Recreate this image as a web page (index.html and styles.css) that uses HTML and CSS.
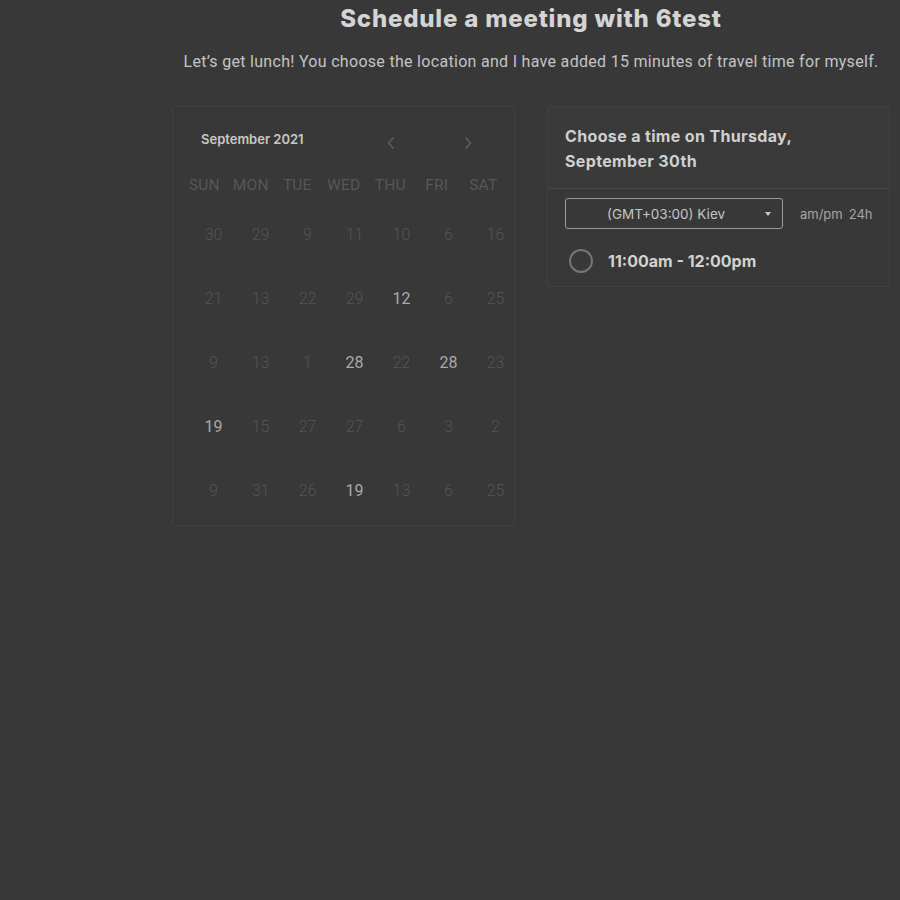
FILE: index.html
```html
<!DOCTYPE html>
<html>
<head>
<meta charset="utf-8">
<link rel="stylesheet" href="styles.css">
</head>
<body>
<div class="page">
  <h1 class="title">Schedule a meeting with 6test</h1>
  <p class="subtitle">Let’s get lunch! You choose the location and I have added 15 minutes of travel time for myself.</p>
  <div class="columns">
    <div class="calendar">
      <div class="cal-head">
        <span class="month">September 2021</span>
        <span class="nav prev"><svg width="10" height="14" viewBox="0 0 10 14"><path d="M7.5 1.5 L2.5 7 L7.5 12.5" fill="none" stroke="#5e5e5e" stroke-width="1.6"/></svg></span>
        <span class="nav next"><svg width="10" height="14" viewBox="0 0 10 14"><path d="M2.5 1.5 L7.5 7 L2.5 12.5" fill="none" stroke="#5e5e5e" stroke-width="1.6"/></svg></span>
      </div>
      <div class="weekdays">
        <span>SUN</span><span>MON</span><span>TUE</span><span>WED</span><span>THU</span><span>FRI</span><span>SAT</span>
      </div>
      <div class="days">
        <span>30</span><span>29</span><span>9</span><span>11</span><span>10</span><span>6</span><span>16</span>
        <span>21</span><span>13</span><span>22</span><span>29</span><span class="on">12</span><span>6</span><span>25</span>
        <span>9</span><span>13</span><span>1</span><span class="on">28</span><span>22</span><span class="on">28</span><span>23</span>
        <span class="on">19</span><span>15</span><span>27</span><span>27</span><span>6</span><span>3</span><span>2</span>
        <span>9</span><span>31</span><span>26</span><span class="on">19</span><span>13</span><span>6</span><span>25</span>
      </div>
    </div>
    <div class="panel">
      <div class="panel-head">Choose a time on Thursday, September 30th</div>
      <div class="controls">
        <div class="select">
          <span class="select-text">(GMT+03:00) Kiev</span>
          <span class="caret"></span>
        </div>
        <div class="format"><span>am/pm</span><span>24h</span></div>
      </div>
      <div class="slot">
        <span class="radio"></span>
        <span class="slot-text">11:00am - 12:00pm</span>
      </div>
    </div>
  </div>
</div>
</body>
</html>
```
FILE: styles.css
```css
html, body {
  margin: 0;
  padding: 0;
  background: #383838;
}
body {
  width: 900px;
  height: 900px;
  font-family: Roboto, "Liberation Sans", sans-serif;
}
.page {
  width: 718px;
  margin-left: 172px;
  padding-top: 4px;
}
.title {
  margin: 0;
  text-align: center;
  font-family: Inter, sans-serif;
  font-weight: 800;
  font-size: 24px;
  line-height: 30px;
  letter-spacing: 0.8px;
  color: #d4d4d4;
  white-space: nowrap;
}
.subtitle {
  margin: 18px 0 0 0;
  text-align: center;
  font-size: 16px;
  line-height: 20px;
  letter-spacing: 0.3px;
  color: #c4c4c4;
  white-space: nowrap;
}
.columns {
  display: flex;
  gap: 32px;
  margin-top: 34px;
  align-items: flex-start;
}
.calendar {
  width: 343px;
  box-sizing: border-box;
  border: 1px solid #414141;
  border-radius: 3px;
  padding-bottom: 3px;
}
.cal-head {
  display: flex;
  align-items: center;
  height: 40px;
  padding: 16px 0 0 28px;
}
.month {
  font-family: Inter, sans-serif;
  font-weight: 600;
  font-size: 13px;
  color: #c8c8c8;
  margin-top: -8px;
}
.nav {
  display: flex;
}
.prev { margin-left: 82px; }
.next { margin-left: 67px; }
.weekdays {
  display: grid;
  grid-template-columns: repeat(7, 46.5px);
  padding-left: 8px;
  height: 28px;
  margin-top: 8px;
  align-items: center;
  font-size: 15.5px;
  color: #575757;
  letter-spacing: 0.2px;
}
.weekdays span { text-align: center; }
.days {
  display: grid;
  grid-template-columns: repeat(7, 47px);
  grid-auto-rows: 64px;
  padding-left: 17px;
  margin-top: 3px;
  align-items: center;
  font-size: 16px;
  font-weight: 300;
  color: #555555;
}
.days span { text-align: center; }
.days .on {
  color: #a9a9a9;
  font-weight: 400;
}
.panel {
  width: 343px;
  box-sizing: border-box;
  border: 1px solid #414141;
  border-radius: 3px;
}
.panel-head {
  padding: 17px 70px 14px 17px;
  font-family: Inter, sans-serif;
  font-weight: 700;
  font-size: 16px;
  line-height: 25px;
  letter-spacing: 0.35px;
  color: #d0d0d0;
  border-bottom: 1px solid #464646;
  background: #3a3a3a;
}
.controls {
  display: flex;
  align-items: center;
  padding: 9px 0 0 17px;
}
.select {
  width: 218px;
  height: 31px;
  box-sizing: border-box;
  border: 1px solid #9a9a9a;
  border-radius: 3px;
  display: flex;
  align-items: center;
  position: relative;
}
.select-text {
  margin-left: 41px;
  font-family: Inter, sans-serif;
  font-size: 13.5px;
  color: #c4c4c4;
}
.caret {
  position: absolute;
  right: 11px;
  top: 13px;
  width: 0;
  height: 0;
  border-left: 3.5px solid transparent;
  border-right: 3.5px solid transparent;
  border-top: 4px solid #c8c8c8;
}
.format {
  display: flex;
  gap: 6px;
  margin-left: 17px;
  font-family: Inter, sans-serif;
  font-size: 13px;
  color: #a6a6a6;
}
.slot {
  display: flex;
  align-items: center;
  padding: 20px 0 13px 21px;
}
.radio {
  width: 24px;
  height: 24px;
  box-sizing: border-box;
  border: 2px solid #767676;
  border-radius: 50%;
}
.slot-text {
  margin-left: 15px;
  font-family: Inter, sans-serif;
  font-weight: 700;
  font-size: 16px;
  color: #d2d2d2;
}
```
